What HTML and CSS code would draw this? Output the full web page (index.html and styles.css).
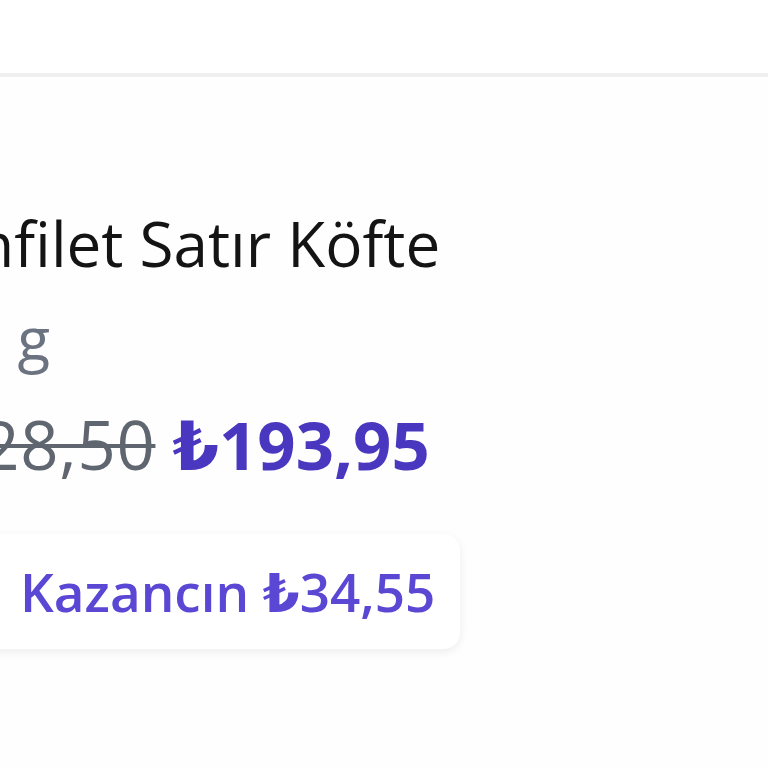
FILE: index.html
```html
<!DOCTYPE html>
<html lang="tr">
<head>
<meta charset="utf-8">
<title>Ürün</title>
<link rel="stylesheet" href="styles.css">
</head>
<body>
<header class="topbar"></header>
<main class="card">
  <div class="info">
    <h1 class="title">Bonfilet Satır Köfte</h1>
    <div class="weight">400 g</div>
    <div class="prices">
      <span class="old-price">₺228,50</span>
      <span class="new-price">₺193,95</span>
    </div>
    <div class="badge">
      <svg class="badge-icon" viewBox="0 0 24 24" width="56" height="56" aria-hidden="true">
        <path d="M20.6 13.4l-7.2 7.2a2 2 0 0 1-2.8 0L3 13V3h10l7.6 7.6a2 2 0 0 1 0 2.8z" fill="none" stroke="#5a48d4" stroke-width="2" stroke-linejoin="round"/>
        <circle cx="7.5" cy="7.5" r="1.5" fill="#5a48d4"/>
      </svg>
      <span class="badge-text">Kazancın ₺34,55</span>
    </div>
  </div>
</main>
</body>
</html>
```
FILE: styles.css
```css
html, body {
  margin: 0;
  padding: 0;
  background: #ffffff;
}

body {
  width: 768px;
  height: 768px;
  overflow: hidden;
  font-family: "Open Sans", "DejaVu Sans", sans-serif;
}

.topbar {
  height: 73px;
  background: #ffffff;
  border-bottom: 4px solid #efefef;
  box-shadow: 0 2px 2px rgba(0, 0, 0, 0.02);
}

.card {
  background: #fefefe;
  height: 691px;
  margin-left: -101px;
  padding-top: 127px;
  box-sizing: border-box;
}

.info {
  display: flex;
  flex-direction: column;
  align-items: flex-start;
}

.title {
  margin: 0;
  font-size: 62px;
  line-height: 78px;
  font-weight: 500;
  color: #141414;
  white-space: nowrap;
}

.weight {
  margin-top: 20px;
  font-size: 60px;
  line-height: 73px;
  color: #6b7280;
  white-space: nowrap;
}

.prices {
  margin-top: 26px;
  display: flex;
  gap: 17px;
  font-size: 67px;
  line-height: 86px;
  white-space: nowrap;
}

.old-price {
  color: #5f6670;
  font-weight: 500;
  letter-spacing: 0.7px;
  text-decoration: line-through;
  text-decoration-thickness: 4px;
}

.new-price {
  color: #4a37c0;
  font-weight: 700;
}

.badge {
  margin-top: 47px;
  display: flex;
  align-items: center;
  gap: 18px;
  padding: 21px 25px 21px 47px;
  background: #ffffff;
  border-radius: 16px;
  box-shadow: 0 3px 10px rgba(0, 0, 0, 0.07);
}

.badge-text {
  font-size: 53px;
  line-height: 73px;
  font-weight: 600;
  color: #5a48d4;
  white-space: nowrap;
}
```
